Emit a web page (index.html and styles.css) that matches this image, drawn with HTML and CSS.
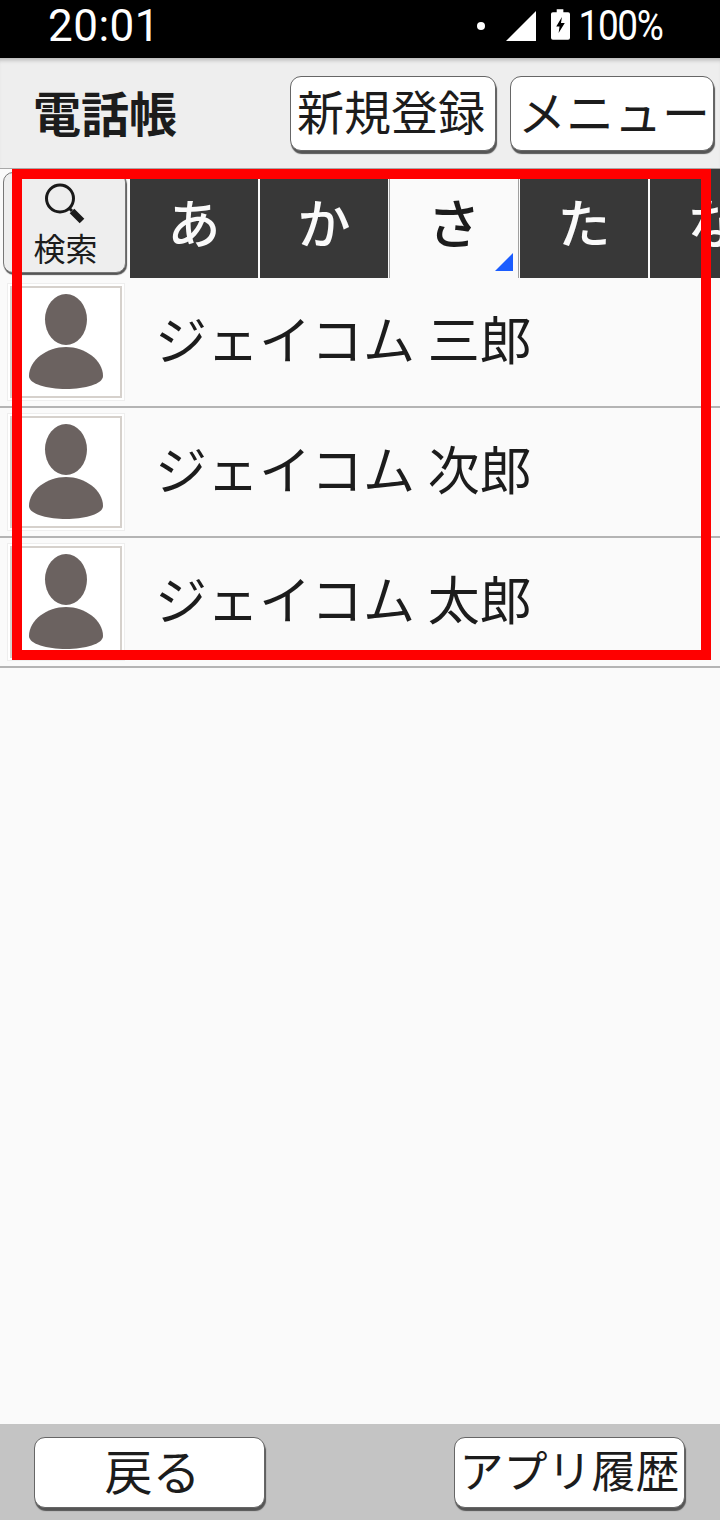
FILE: index.html
```html
<!DOCTYPE html>
<html lang="ja">
<head>
  <meta charset="UTF-8">
  <meta name="viewport" content="width=device-width, initial-scale=1.0">
  <title>電話帳</title>
  <link rel="stylesheet" href="styles.css">
</head>
<body>
  <div class="status-bar">
    <span class="clock">20:01</span>
    <div class="status-icons">
      <span class="dot"></span>
      <svg class="signal" width="30" height="30" viewBox="0 0 30 30"><path d="M30 0V30H0Z" fill="#fff"/></svg>
      <svg class="battery" width="19" height="31" viewBox="0 0 20 32">
        <path d="M6 0H13V3H18Q20 3 20 5V30Q20 32 18 32H2Q0 32 0 30V5Q0 3 2 3H6Z" fill="#fff"/>
        <path d="M11.500 8L5.500 18H9L8 25L14.500 14.500H10.500Z" fill="#000"/>
      </svg>
      <span class="percent">100%</span>
    </div>
  </div>

  <div class="toolbar">
    <h1>電話帳</h1>
    <div class="toolbar-buttons">
      <button class="btn btn-new">新規登録</button>
      <button class="btn btn-menu">メニュー</button>
    </div>
  </div>

  <div class="tab-row">
    <button class="search-btn">
      <svg width="44" height="44" viewBox="0 0 44 44">
        <circle cx="17" cy="16.500" r="13.500" fill="none" stroke="#1a1a1a" stroke-width="3"/>
        <path d="M26 26L29 29" stroke="#1a1a1a" stroke-width="3"/>
        <path d="M29 29L39 39" stroke="#1a1a1a" stroke-width="6.500"/>
      </svg>
      <span>検索</span>
    </button>
    <div class="tabs">
      <div class="tab">あ</div>
      <div class="tab">か</div>
      <div class="tab active">さ<span class="corner"></span></div>
      <div class="tab">た</div>
      <div class="tab">な</div>
    </div>
  </div>

  <ul class="contact-list">
    <li class="contact">
      <div class="thumb">
        <div class="thumb-inner">
          <svg width="104" height="112" viewBox="0 0 104 112"><ellipse cx="52" cy="33.500" rx="21" ry="25.500" fill="#6b6260"/><path d="M15 90C15 74 33 61 52 61S89 74 89 90C89 98 71 103 52 103S15 98 15 90Z" fill="#6b6260"/></svg>
        </div>
      </div>
      <span class="name">ジェイコム 三郎</span>
    </li>
    <li class="contact">
      <div class="thumb">
        <div class="thumb-inner">
          <svg width="104" height="112" viewBox="0 0 104 112"><ellipse cx="52" cy="33.500" rx="21" ry="25.500" fill="#6b6260"/><path d="M15 90C15 74 33 61 52 61S89 74 89 90C89 98 71 103 52 103S15 98 15 90Z" fill="#6b6260"/></svg>
        </div>
      </div>
      <span class="name">ジェイコム 次郎</span>
    </li>
    <li class="contact">
      <div class="thumb">
        <div class="thumb-inner">
          <svg width="104" height="112" viewBox="0 0 104 112"><ellipse cx="52" cy="33.500" rx="21" ry="25.500" fill="#6b6260"/><path d="M15 90C15 74 33 61 52 61S89 74 89 90C89 98 71 103 52 103S15 98 15 90Z" fill="#6b6260"/></svg>
        </div>
      </div>
      <span class="name">ジェイコム 太郎</span>
    </li>
  </ul>

  <div class="bottom-bar">
    <button class="btn btn-back">戻る</button>
    <button class="btn btn-history">アプリ履歴</button>
  </div>

  <div class="highlight"></div>
</body>
</html>
```

FILE: styles.css
```css
* {
  box-sizing: border-box;
}

html, body {
  height: 100%;
}

body {
  position: relative;
  margin: 0;
  width: 720px;
  height: 1520px;
  overflow: hidden;
  display: flex;
  flex-direction: column;
  background: #fafafa;
  color: #1c1c1c;
  font-family: "Noto Sans CJK JP", "Noto Sans", sans-serif;
}

.status-bar {
  flex: 0 0 58px;
  display: flex;
  align-items: center;
  justify-content: space-between;
  padding: 0 57px 7px 48px;
  background: #000;
  color: #fff;
  font-family: Roboto, sans-serif;
}

.clock {
  font-size: 44px;
  line-height: 1;
  letter-spacing: 0.5px;
}

.status-icons {
  display: flex;
  align-items: center;
}

.dot {
  width: 8px;
  height: 8px;
  margin-right: 21px;
  border-radius: 50%;
  background: #fff;
}

.signal {
  margin-right: 15px;
}

.battery {
  margin-top: -3px;
}

.percent {
  display: inline-block;
  margin-left: -3px;
  font-size: 42px;
  line-height: 1;
  letter-spacing: -1.500px;
  transform: scaleX(0.88);
  transform-origin: right center;
}

.toolbar {
  flex: 0 0 111px;
  display: flex;
  align-items: center;
  justify-content: space-between;
  padding: 0 6px 0 33px;
  background: #eeeeee;
  border-bottom: 1px solid #a8a8a8;
  box-shadow: inset 0 5px 4px -3px rgba(0, 0, 0, 0.25);
}

.toolbar h1 {
  margin: 0;
  padding-bottom: 5px;
  font-size: 48px;
  font-weight: 700;
  line-height: 1;
}

.toolbar-buttons {
  display: flex;
  gap: 14px;
}

.btn {
  display: flex;
  align-items: center;
  justify-content: center;
  padding: 0 0 7px;
  height: 75px;
  border: 1px solid #666;
  border-radius: 11px;
  background: #fff;
  box-shadow: 1px 3px 1px #555;
  color: #1c1c1c;
  font-family: inherit;
  font-size: 48px;
  line-height: 1;
  white-space: nowrap;
}

.btn-new {
  width: 206px;
  padding-right: 4px;
  font-size: 47px;
}

.btn-menu {
  width: 204px;
  padding-left: 4px;
}

.tab-row {
  flex: 0 0 109px;
  display: flex;
  padding-left: 3px;
}

.search-btn {
  flex: 0 0 123px;
  display: flex;
  flex-direction: column;
  align-items: center;
  height: 101px;
  margin-top: 3px;
  padding: 9px 0 0;
  border: 1px solid #777;
  border-radius: 10px;
  background: #eeeeee;
  box-shadow: 1px 2px 1px #555;
  color: #1c1c1c;
  font-family: inherit;
}

.search-btn svg {
  display: block;
}

.search-btn span {
  margin: 3px 0 0 2px;
  font-size: 32px;
  line-height: 36px;
}

.tabs {
  display: flex;
  gap: 2px;
  margin-left: 4px;
}

.tab {
  position: relative;
  flex: 0 0 128px;
  display: flex;
  align-items: center;
  justify-content: center;
  background: #383838;
  color: #fafafa;
  font-size: 53px;
  font-weight: 500;
  line-height: 1;
  padding-bottom: 5px;
}

.tab.active {
  background: #fafafa;
  color: #1c1c1c;
  border-left: 1px solid #a0a0a0;
  border-right: 1px solid #a0a0a0;
  margin: 0 -1px;
  flex-basis: 130px;
}

.corner {
  position: absolute;
  right: 5px;
  bottom: 7px;
  width: 18px;
  height: 18px;
  background: #1a5cff;
  clip-path: polygon(100% 0, 100% 100%, 0 100%);
}

.contact-list {
  margin: 0;
  padding: 0;
  list-style: none;
}

.contact {
  display: flex;
  align-items: center;
  height: 130px;
  border-bottom: 2px solid #b4b4b4;
  padding-left: 7px;
}

.thumb {
  flex: 0 0 118px;
  height: 118px;
  padding: 2px;
  border: 1px solid #eeeeee;
  background: #fff;
}

.thumb-inner {
  display: flex;
  align-items: center;
  justify-content: center;
  height: 100%;
  border: 2px solid #d6d1cc;
  background: #fff;
}

.name {
  margin: 0 0 8px 30px;
  font-size: 52px;
  line-height: 1;
  word-spacing: 1px;
  white-space: nowrap;
}

.bottom-bar {
  margin-top: auto;
  flex: 0 0 96px;
  display: flex;
  justify-content: space-between;
  padding: 13px 35px 0 34px;
  background: #c4c4c4;
}

.bottom-bar .btn {
  width: 231px;
  height: 71px;
}

.btn-back {
  padding-left: 6px;
}

.bottom-bar .btn-history {
  font-size: 44px;
}

/* 红框标注 */
.highlight {
  position: absolute;
  left: 12px;
  top: 169px;
  width: 699px;
  height: 491px;
  border: 10px solid #ff0000;
  pointer-events: none;
}
```
